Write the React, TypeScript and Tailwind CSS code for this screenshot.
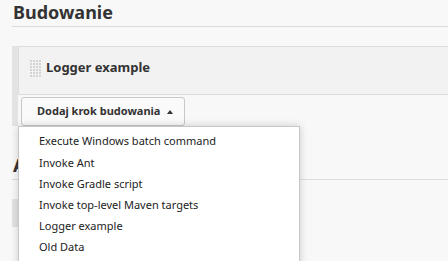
const items = [
  "Execute Windows batch command",
  "Invoke Ant",
  "Invoke Gradle script",
  "Invoke top-level Maven targets",
  "Logger example",
  "Old Data",
];

function DragHandle() {
  return (
    <svg width="11" height="17" viewBox="0 0 11 17" className="shrink-0">
      {Array.from({ length: 6 }).map((_, r) =>
        Array.from({ length: 4 }).map((_, c) => (
          <rect key={`${r}-${c}`} x={c * 3} y={r * 3} width="2" height="2" fill="#d4d4d4" />
        ))
      )}
    </svg>
  );
}

export default function App() {
  return (
    <div
      className="relative w-[448px] h-[261px] overflow-hidden bg-[#f8f8f8] text-[#333]"
      style={{ fontFamily: '"Noto Sans", "Open Sans", sans-serif' }}
    >
      <div className="ml-[12px]">
        <h1 className="h-[27px] pl-[1px] pt-[1px] text-[18px] leading-[22px] font-bold text-[#333] border-b border-[#dcdcdc]">
          Budowanie
        </h1>

        <div className="mt-[19px] border-l-[6px] border-[#e3e3e3]">
          <div className="h-[49px] flex items-center gap-[5px] pl-[11px] pb-[5px] bg-[#f2f2f2] border-y border-l border-[#dcdcdc]">
            <DragHandle />
            <span className="text-[13px] font-bold leading-none pb-[1px]">Logger example</span>
          </div>
          <div className="pt-[2px] pl-[3px] h-[31px]">
            <button className="h-[29px] w-[164px] flex items-center gap-[7px] pl-[15px] bg-[#fafafa] border border-[#c8c8c8] rounded-[3px] text-[11px] font-bold text-[#333]">
              Dodaj krok budowania
              <svg width="6" height="4" viewBox="0 0 6 4">
                <path d="M0 4 L3 0 L6 4 Z" fill="#333" />
              </svg>
            </button>
          </div>
        </div>

        <div className="mt-[28px] h-[26px] border-b border-[#dcdcdc] text-[18px] font-bold leading-[22px] pl-[1px]">
          Akcje
        </div>
        <div className="mt-[19px] w-[6px] h-[28px] bg-[#e3e3e3]" />
      </div>

      <div className="absolute left-[18px] top-[126px] w-[282px] h-[150px] bg-white border border-[#c8c8c8] shadow-[0_0_8px_rgba(0,0,0,0.18)] pt-[4px]">
        {items.map((t) => (
          <div key={t} className="h-[21.2px] flex items-center pl-[20px] text-[11px] text-[#222]">
            {t}
          </div>
        ))}
      </div>
    </div>
  );
}
